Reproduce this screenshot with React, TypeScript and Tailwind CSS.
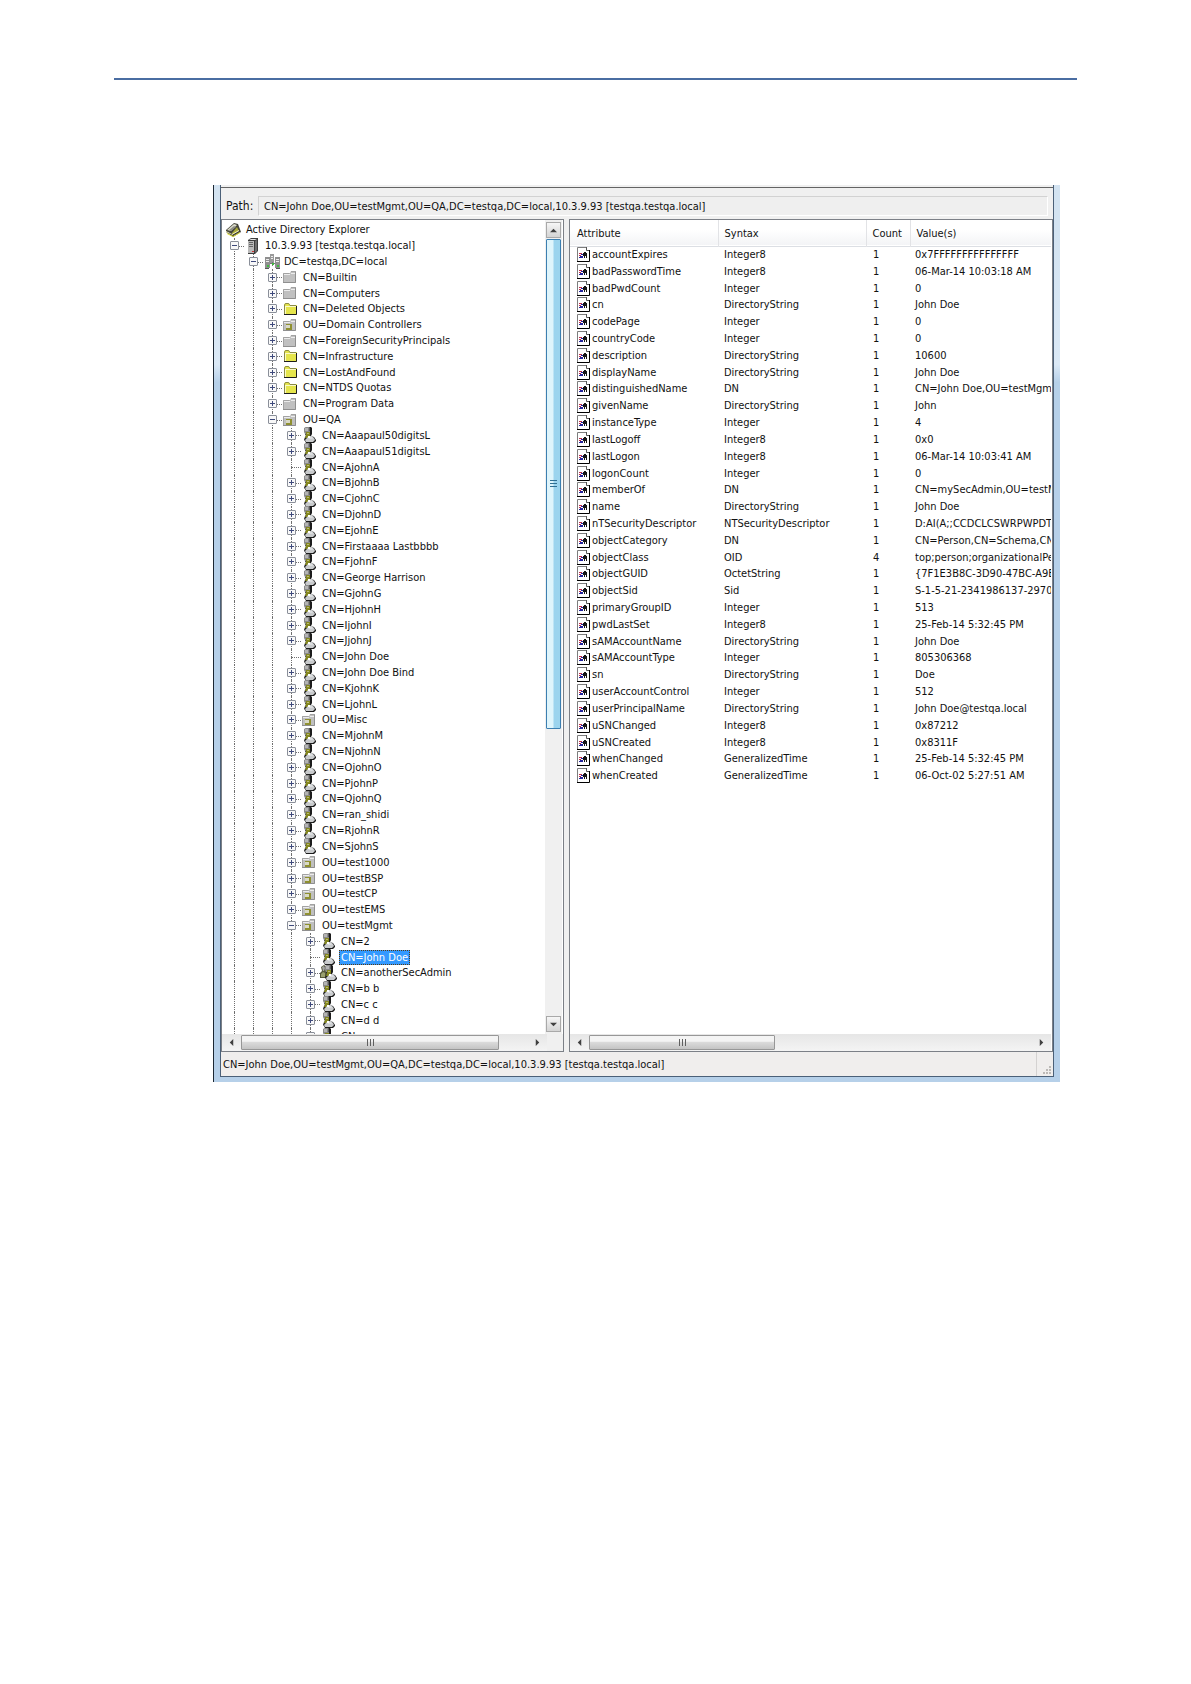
import { useState } from 'react';

type IconName = 'root' | 'server' | 'domain' | 'container' | 'folder' | 'ou' | 'user' | 'group';

interface TreeNode {
  label: string;
  depth: number;
  icon: IconName;
  box?: '+' | '-';
}

interface Attribute {
  name: string;
  syntax: string;
  count: number;
  value: string;
}

const PATH = 'CN=John Doe,OU=testMgmt,OU=QA,DC=testqa,DC=local,10.3.9.93 [testqa.testqa.local]';

const user = (label: string, depth = 4): TreeNode => ({ label, depth, icon: 'user', box: '+' });
const leaf = (label: string, depth = 4): TreeNode => ({ label, depth, icon: 'user' });

const nodes: TreeNode[] = [
  { label: 'Active Directory Explorer', depth: 0, icon: 'root' },
  { label: '10.3.9.93 [testqa.testqa.local]', depth: 1, icon: 'server', box: '-' },
  { label: 'DC=testqa,DC=local', depth: 2, icon: 'domain', box: '-' },
  { label: 'CN=Builtin', depth: 3, icon: 'container', box: '+' },
  { label: 'CN=Computers', depth: 3, icon: 'container', box: '+' },
  { label: 'CN=Deleted Objects', depth: 3, icon: 'folder', box: '+' },
  { label: 'OU=Domain Controllers', depth: 3, icon: 'ou', box: '+' },
  { label: 'CN=ForeignSecurityPrincipals', depth: 3, icon: 'container', box: '+' },
  { label: 'CN=Infrastructure', depth: 3, icon: 'folder', box: '+' },
  { label: 'CN=LostAndFound', depth: 3, icon: 'folder', box: '+' },
  { label: 'CN=NTDS Quotas', depth: 3, icon: 'folder', box: '+' },
  { label: 'CN=Program Data', depth: 3, icon: 'container', box: '+' },
  { label: 'OU=QA', depth: 3, icon: 'ou', box: '-' },
  user('CN=Aaapaul50digitsL'),
  user('CN=Aaapaul51digitsL'),
  leaf('CN=AjohnA'),
  user('CN=BjohnB'),
  user('CN=CjohnC'),
  user('CN=DjohnD'),
  user('CN=EjohnE'),
  user('CN=Firstaaaa Lastbbbb'),
  user('CN=FjohnF'),
  user('CN=George Harrison'),
  user('CN=GjohnG'),
  user('CN=HjohnH'),
  user('CN=IjohnI'),
  user('CN=JjohnJ'),
  leaf('CN=John Doe'),
  user('CN=John Doe Bind'),
  user('CN=KjohnK'),
  user('CN=LjohnL'),
  { label: 'OU=Misc', depth: 4, icon: 'ou', box: '+' },
  user('CN=MjohnM'),
  user('CN=NjohnN'),
  user('CN=OjohnO'),
  user('CN=PjohnP'),
  user('CN=QjohnQ'),
  user('CN=ran_shidi'),
  user('CN=RjohnR'),
  user('CN=SjohnS'),
  { label: 'OU=test1000', depth: 4, icon: 'ou', box: '+' },
  { label: 'OU=testBSP', depth: 4, icon: 'ou', box: '+' },
  { label: 'OU=testCP', depth: 4, icon: 'ou', box: '+' },
  { label: 'OU=testEMS', depth: 4, icon: 'ou', box: '+' },
  { label: 'OU=testMgmt', depth: 4, icon: 'ou', box: '-' },
  user('CN=2', 5),
  leaf('CN=John Doe', 5),
  { label: 'CN=anotherSecAdmin', depth: 5, icon: 'group', box: '+' },
  user('CN=b b', 5),
  user('CN=c c', 5),
  user('CN=d d', 5),
  user('CN=e e', 5),
];

const attributes: Attribute[] = [
  { name: 'accountExpires', syntax: 'Integer8', count: 1, value: '0x7FFFFFFFFFFFFFFF' },
  { name: 'badPasswordTime', syntax: 'Integer8', count: 1, value: '06-Mar-14 10:03:18 AM' },
  { name: 'badPwdCount', syntax: 'Integer', count: 1, value: '0' },
  { name: 'cn', syntax: 'DirectoryString', count: 1, value: 'John Doe' },
  { name: 'codePage', syntax: 'Integer', count: 1, value: '0' },
  { name: 'countryCode', syntax: 'Integer', count: 1, value: '0' },
  { name: 'description', syntax: 'DirectoryString', count: 1, value: '10600' },
  { name: 'displayName', syntax: 'DirectoryString', count: 1, value: 'John Doe' },
  { name: 'distinguishedName', syntax: 'DN', count: 1, value: 'CN=John Doe,OU=testMgm' },
  { name: 'givenName', syntax: 'DirectoryString', count: 1, value: 'John' },
  { name: 'instanceType', syntax: 'Integer', count: 1, value: '4' },
  { name: 'lastLogoff', syntax: 'Integer8', count: 1, value: '0x0' },
  { name: 'lastLogon', syntax: 'Integer8', count: 1, value: '06-Mar-14 10:03:41 AM' },
  { name: 'logonCount', syntax: 'Integer', count: 1, value: '0' },
  { name: 'memberOf', syntax: 'DN', count: 1, value: 'CN=mySecAdmin,OU=testM' },
  { name: 'name', syntax: 'DirectoryString', count: 1, value: 'John Doe' },
  { name: 'nTSecurityDescriptor', syntax: 'NTSecurityDescriptor', count: 1, value: 'D:AI(A;;CCDCLCSWRPWPDT' },
  { name: 'objectCategory', syntax: 'DN', count: 1, value: 'CN=Person,CN=Schema,CN' },
  { name: 'objectClass', syntax: 'OID', count: 4, value: 'top;person;organizationalPe' },
  { name: 'objectGUID', syntax: 'OctetString', count: 1, value: '{7F1E3B8C-3D90-47BC-A9E' },
  { name: 'objectSid', syntax: 'Sid', count: 1, value: 'S-1-5-21-2341986137-2970' },
  { name: 'primaryGroupID', syntax: 'Integer', count: 1, value: '513' },
  { name: 'pwdLastSet', syntax: 'Integer8', count: 1, value: '25-Feb-14 5:32:45 PM' },
  { name: 'sAMAccountName', syntax: 'DirectoryString', count: 1, value: 'John Doe' },
  { name: 'sAMAccountType', syntax: 'Integer', count: 1, value: '805306368' },
  { name: 'sn', syntax: 'DirectoryString', count: 1, value: 'Doe' },
  { name: 'userAccountControl', syntax: 'Integer', count: 1, value: '512' },
  { name: 'userPrincipalName', syntax: 'DirectoryString', count: 1, value: 'John Doe@testqa.local' },
  { name: 'uSNChanged', syntax: 'Integer8', count: 1, value: '0x87212' },
  { name: 'uSNCreated', syntax: 'Integer8', count: 1, value: '0x8311F' },
  { name: 'whenChanged', syntax: 'GeneralizedTime', count: 1, value: '25-Feb-14 5:32:45 PM' },
  { name: 'whenCreated', syntax: 'GeneralizedTime', count: 1, value: '06-Oct-02 5:27:51 AM' },
];

function Person() {
  return (
    <>
      <path d="M4 1l2-1h4l1 1v6l-1 2 3 1 2 3v1l-2 2H5l-1-2-1-1 1-3 1-1-1-2z" fill="#1c1c1c" />
      <path d="M3 1l2-1h3l1 1v4l-1 2H4L3 5z" fill="#8a8a8a" />
      <path d="M4 1h3v3H4z" fill="#b4b4b4" />
      <path d="M8 1h1v3H8z" fill="#5c5c5c" />
      <path d="M5 5h4v3l-1 3H4l1-3z" fill="#84871e" />
      <path d="M6 6h2v1H6z" fill="#b9b97a" />
      <path d="M4 13l2-2 2-2h3l2 2 1 2-2 2H5z" fill="#c9cbcd" />
      <path d="M8 10h3l1 2H8z" fill="#dcdee0" />
      <path d="M7 9h2v2H7z" fill="#fff" />
    </>
  );
}

function NodeIcon({ name }: { name: IconName }) {
  const svg = 'block h-4 w-4 shrink-0 overflow-visible';
  switch (name) {
    case 'root':
      return (
        <svg className={svg} viewBox="0 0 16 16">
          <path d="M1 8l8-7 4 1 3 8-8 5-7-5z" fill="#45453a" />
          <path d="M2 8l7-6 3 1-6 6z" fill="#dcdccb" />
          <path d="M4 8l5-4 2 1-5 4z" fill="#8d8d85" />
          <path d="M7 11l5-6 2 4-6 4z" fill="#a9a93a" />
          <path d="M1 9l6 3 7-4v2l-6 3-7-3z" fill="#f0f0c0" />
          <path d="M2 11l6 3 7-4v1l-7 4-6-3z" fill="#dede35" />
          <path d="M8 13l7-4" stroke="#333" />
        </svg>
      );
    case 'server':
      return (
        <svg className={svg} viewBox="0 0 16 16">
          <path d="M4 2l3-2h7v13l-3 3H4z" fill="#3c3c3c" />
          <path d="M4 3h6v12H4z" fill="#bababa" />
          <path d="M5 2l2-1h6l-2 1z" fill="#e4e4e4" />
          <path d="M11 3l2-1v11l-2 2z" fill="#6d6d6d" />
          <path d="M5 4.500h4M5 6.500h4M5 8.500h4" stroke="#666" />
          <path d="M8 13h2v1H8z" fill="#c33" />
        </svg>
      );
    case 'domain':
      return (
        <svg className={svg} viewBox="0 0 16 16">
          <path d="M7 0h4v9H7z" fill="#9a9a9a" />
          <path d="M8 2.500h2M8 4.500h2" stroke="#eee" />
          <path d="M2 3h5v11H2zM12 3h5v11h-5z" fill="#8f8f8f" />
          <path d="M3 5.500h3M3 7.500h3M13 5.500h3M13 7.500h3" stroke="#ededed" />
          <path d="M7 9.500h5M9.500 8v4" stroke="#777" />
          <path d="M4 11h2v2H4zM14 11h2v2h-2zM9 9h2v2H9z" fill="#3fbf3f" />
          <path d="M2 14h4v1H2zM13 14h4v1h-4z" fill="#555" />
        </svg>
      );
    case 'container':
    case 'ou':
      return (
        <svg className={svg} viewBox="0 0 16 16">
          <path d="M1 4h7l1-2h5v12H1z" fill="#c0c0c0" />
          <path d="M1.500 14V4.500h6M9 2.500h5" stroke="#a2a2a2" fill="none" />
          <path d="M1 13.500h12.500V3" stroke="#8f8f8f" fill="none" />
          <path d="M2 5.500h6M9 4.500h4" stroke="#ececec" />
          {name === 'ou' && (
            <>
              <path d="M4 7h6v6H4z" fill="#8f9030" />
              <path d="M4 8h4v3H4z" fill="#d9d9c6" />
            </>
          )}
        </svg>
      );
    case 'folder':
      return (
        <svg className={svg} viewBox="0 0 16 16">
          <path d="M2 4l1-2h4l1 2h7v10H2z" fill="#e5e54c" />
          <path d="M2.500 14V4l1-1.500h3L8 4.500h6" stroke="#8a8a4a" fill="none" />
          <path d="M3 5.500h11M3.500 5v8" stroke="#fafac8" />
          <path d="M2 13.500h12.500V5" stroke="#1c1c1c" fill="none" />
        </svg>
      );
    case 'group':
      return (
        <svg className={svg} viewBox="0 0 16 16">
          <path d="M0 13V8l2-2-1-4 3-2 3 2-1 4 2 3v4z" fill="#55583a" />
          <path d="M2 2l2-1 1 2-1 3H3z" fill="#a5a5a5" />
          <path d="M1 9l2-2 2 1v4H1z" fill="#9aa070" />
          <path d="M8 1h4v5H8z" fill="#3b3b2a" />
          <g transform="translate(2 0)">
            <Person />
          </g>
        </svg>
      );
    default:
      return (
        <svg className={svg} viewBox="0 0 16 16">
          <Person />
        </svg>
      );
  }
}

function AttributeIcon() {
  return (
    <svg className="block h-4 w-[13px] shrink-0" viewBox="0 0 13 16">
      <path d="M0 0h9l4 4v12H0z" fill="#fff" />
      <path d="M0.500 15V0.500H9" stroke="#7d7d7d" fill="none" />
      <path d="M9.500 0v3.500H13" stroke="#555" fill="none" />
      <path d="M0 14.500h12.500V3" stroke="#000" fill="none" />
      <path d="M2 6h3v1H2zM2 8h2v1H2z" fill="#c02a4a" />
      <path d="M3 9h3v2H3zM4 7h2v1H4zM2 10h1v1H2z" fill="#23239a" />
      <path d="M6 6h1V5h2v1h1v5H9V9H8v2H7V9H6z" fill="#151515" />
    </svg>
  );
}

function Row({ node, selected, onSelect }: { node: TreeNode; selected: boolean; onSelect: () => void }) {
  // one dotted guide per ancestor level, the node's own column follows
  const guides = Array.from({ length: Math.max(node.depth - 1, 0) });

  return (
    <li role="treeitem" aria-level={node.depth + 1} aria-selected={selected} className="flex min-h-0 items-center whitespace-nowrap">
      {guides.map((_, i) => (
        <span key={i} className="flex w-[19px] shrink-0 justify-center self-stretch">
          <span className="border-l border-dotted border-[#707070]"></span>
        </span>
      ))}
      {node.depth > 0 && (
        <span className="relative flex w-[19px] shrink-0 items-center justify-center self-stretch">
          <span className="absolute inset-y-0 left-[9px] border-l border-dotted border-[#707070]"></span>
          <span className="absolute top-1/2 right-0 left-[9px] border-t border-dotted border-[#707070]"></span>
          {node.box && (
            <button
              aria-label={node.box === '+' ? 'Expand' : 'Collapse'}
              className="relative flex h-[9px] w-[9px] items-center justify-center rounded-[1px] border border-[#8a8f99] bg-[#f8f8f8]"
            >
              <svg className="block h-[5px] w-[5px] shrink-0" viewBox="0 0 5 5">
                <path d={node.box === '+' ? 'M0 2h5v1H0zM2 0h1v5H2z' : 'M0 2h5v1H0z'} fill="#3f4a7c" />
              </svg>
            </button>
          )}
        </span>
      )}
      <span className="flex w-[19px] shrink-0">
        <NodeIcon name={node.icon} />
      </span>
      <button
        onClick={onSelect}
        className={`border px-px leading-[13px] ${selected ? 'border-dotted border-[#5a3a10] bg-[#3399ff] text-white' : 'border-transparent'}`}
      >
        {node.label}
      </button>
    </li>
  );
}

function Arrow({ dir, label }: { dir: 'up' | 'down' | 'left' | 'right'; label: string }) {
  const d = { up: 'M0 6l4-4 4 4z', down: 'M0 2l4 4 4-4z', left: 'M6 0L2 4l4 4z', right: 'M2 0l4 4-4 4z' }[dir];
  const vertical = dir === 'up' || dir === 'down';
  return (
    <button
      aria-label={label}
      className={`flex shrink-0 items-center justify-center ${vertical ? 'h-4 w-[15px] border border-[#a9a9a9] bg-linear-to-b from-[#f6f6f6] to-[#d4d4d4]' : 'h-4 w-[19px]'}`}
    >
      <svg className="block h-[7px] w-[7px]" viewBox="0 0 8 8">
        <path d={d} fill="#404040" />
      </svg>
    </button>
  );
}

function HScroll({ thumb }: { thumb: string }) {
  return (
    <div className="flex h-[17px] flex-1 shrink-0 items-center bg-linear-to-b from-[#e6e6e6] to-[#f4f4f4]">
      <Arrow dir="left" label="Scroll left" />
      <div className="flex flex-1">
        <div className={`flex h-[15px] items-center justify-center gap-[2px] rounded-[1px] border border-[#979797] bg-linear-to-b from-[#f4f4f4] from-40% via-[#dadada] via-50% to-[#c4c4c4] ${thumb}`}>
          <span className="h-[7px] w-px bg-[#606060]"></span>
          <span className="h-[7px] w-px bg-[#606060]"></span>
          <span className="h-[7px] w-px bg-[#606060]"></span>
        </div>
      </div>
      <Arrow dir="right" label="Scroll right" />
    </div>
  );
}

export default function App() {
  const [selected, setSelected] = useState(46);

  return (
    <div className="bg-white px-[114px] pt-[78px] text-[11px] text-[#111] [font-family:'DejaVu_Sans_Condensed','DejaVu_Sans',sans-serif]">
      <hr className="border-t-2 border-[#4a6da2]" />

      <main className="mt-[105px] mr-[17px] ml-[99px] border-l border-[#1c2733] bg-linear-to-b from-[#d3e3f1] from-5% via-[#dbe9f6] via-20% to-[#b6d0e9] to-22% px-[6px] pb-[5px]">
        <div className="border-x border-b border-[#4b6078] bg-[#f0f0f0]">
          <div className="h-[3px] border-b border-[#646464]"></div>

          <div className="flex h-[31px] items-center px-[5px] pt-[5px]">
            <label htmlFor="path" className="w-8 shrink-0 text-[12px]">Path:</label>
            <input
              id="path"
              readOnly
              value={PATH}
              className="h-5 min-w-0 flex-1 border border-t-[#d2d2d2] border-r-white border-b-white border-l-[#d2d2d2] bg-[#efefef] px-[5px] outline-none"
            />
          </div>

          <div className="flex">
            <section className="flex w-[343px] shrink-0 flex-col border border-[#7c8087] bg-white">
              <div className="flex h-[814px]">
                <ul role="tree" aria-label="Directory" className="min-w-0 flex-1 overflow-hidden pt-[2px] pl-[3px]">
                  <li role="none">
                    <ul role="group" className="grid h-[822px] auto-rows-fr">
                      {nodes.map((n, i) => (
                        <Row key={i} node={n} selected={i === selected} onSelect={() => setSelected(i)} />
                      ))}
                    </ul>
                  </li>
                </ul>
                <div className="mr-px flex w-[17px] flex-col items-center bg-[#f0f0f0] py-[2px]">
                  <Arrow dir="up" label="Scroll up" />
                  <div className="flex w-full flex-1 justify-center pt-px">
                    <div className="flex h-[63%] w-[15px] flex-col items-center justify-center gap-[2px] rounded-[1px] border border-[#3c7fb1] bg-linear-to-r from-[#dff5fc] from-45% to-[#9bd4ee] to-55%">
                      <span className="h-px w-[7px] bg-[#2f6f92]"></span>
                      <span className="h-px w-[7px] bg-[#2f6f92]"></span>
                      <span className="h-px w-[7px] bg-[#2f6f92]"></span>
                    </div>
                  </div>
                  <Arrow dir="down" label="Scroll down" />
                </div>
              </div>
              <div className="flex bg-[#f0f0f0] pr-4">
                <HScroll thumb="w-[90%]" />
              </div>
            </section>

            <section className="ml-[5px] flex min-w-0 flex-1 flex-col border border-[#7c8087] bg-white pr-px">
              <div className="h-[814px] overflow-hidden">
                <table className="h-[565px] w-full table-fixed border-collapse text-left whitespace-nowrap">
                  <colgroup>
                    <col className="w-[148px]" />
                    <col className="w-[148px]" />
                    <col className="w-[44px]" />
                    <col />
                  </colgroup>
                  <thead>
                    <tr className="h-[26px] border-b border-[#dcdfe4] bg-linear-to-b from-white from-40% to-[#f3f4f6]">
                      <th className="border-r border-[#e2e3e6] p-0 pt-[2px] pl-[7px] font-normal">Attribute</th>
                      <th className="border-r border-[#e2e3e6] p-0 pt-[2px] pl-[6px] font-normal">Syntax</th>
                      <th className="border-r border-[#e2e3e6] p-0 pt-[2px] pl-[6px] font-normal">Count</th>
                      <th className="p-0 pt-[2px] pl-[6px] font-normal">Value(s)</th>
                    </tr>
                  </thead>
                  <tbody>
                    {attributes.map((a) => (
                      <tr key={a.name}>
                        <td className="p-0 pl-[7px] leading-4">
                          <div className="flex h-4 items-center gap-[2px]">
                            <AttributeIcon />
                            {a.name}
                          </div>
                        </td>
                        <td className="p-0 pl-[6px] leading-4">{a.syntax}</td>
                        <td className="p-0 pl-[7px] leading-4">{a.count}</td>
                        <td className="p-0 pl-[5px] leading-4">{a.value}</td>
                      </tr>
                    ))}
                  </tbody>
                </table>
              </div>
              <div className="flex">
                <HScroll thumb="w-[42%]" />
              </div>
            </section>
          </div>

          <footer className="flex h-6 bg-[#f0eeed] pl-[2px]">
            <p className="flex flex-1 items-center pt-[3px]">{PATH}</p>
            <div className="flex w-[17px] items-end justify-end border-l border-[#d4d2d1] p-[2px]">
              <svg className="block h-[8px] w-[8px]" viewBox="0 0 8 8">
                <path d="M6 0h2v2H6zM3 3h2v2H3zM6 3h2v2H6zM0 6h2v2H0zM3 6h2v2H3zM6 6h2v2H6z" fill="#bcb9b6" />
              </svg>
            </div>
          </footer>
        </div>
      </main>
    </div>
  );
}
